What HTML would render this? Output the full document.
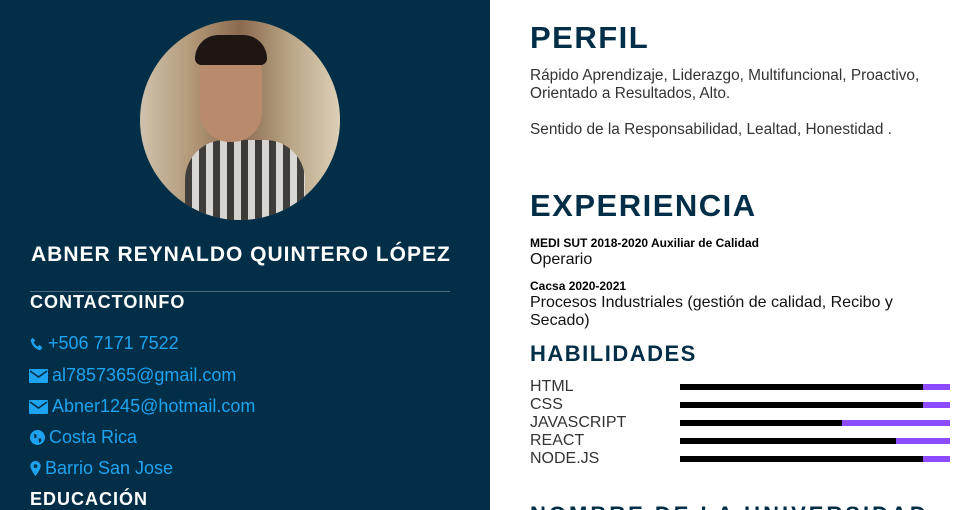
<!DOCTYPE html>
<html><head><style>
html,body{margin:0;width:968px;height:510px;overflow:hidden}
body{font-family:"Liberation Sans",sans-serif;background:#fff;position:relative}
.l{position:absolute;left:0;top:0;width:490px;height:510px;background:#022f47}
.ph{position:absolute;left:140px;top:20px;width:200px;height:200px;border-radius:50%;overflow:hidden;background:linear-gradient(90deg,#cfc2ad 0%,#b39a7a 25%,#8b6a4f 50%,#b8a585 75%,#ddd0b8 100%)}
.a{position:absolute;color:#fff;font-weight:bold}
.c{position:absolute;left:30px;color:#1ea3f0;font-size:18px}
.c svg{vertical-align:-2px;margin-right:4px}
.r{position:absolute;color:#022f47;font-weight:bold;letter-spacing:1.5px}
.t{position:absolute;left:530px;color:#333;font-size:15.4px}
.bar{position:absolute;left:680px;width:270px;height:6px;background:#8c4bff}
.bar div{height:6px;background:#000}
</style></head><body>
<div class="l">
<div class="ph">
<div style="position:absolute;left:45px;top:120px;width:120px;height:90px;border-radius:40px 40px 0 0;background:repeating-linear-gradient(90deg,#333 0 7px,#ddd 7px 14px),#888;opacity:.9"></div>
<div style="position:absolute;left:60px;top:22px;width:62px;height:100px;border-radius:30px;background:#b98b6c"></div>
<div style="position:absolute;left:55px;top:15px;width:72px;height:30px;border-radius:30px 30px 8px 8px;background:#1d1612"></div>
</div>
<div class="a" style="left:31px;top:243px;font-size:21px;letter-spacing:1px">ABNER REYNALDO QUINTERO LÓPEZ</div>
<div style="position:absolute;left:30px;top:291px;width:420px;height:1px;background:#4a6b7e"></div>
<div class="a" style="left:30px;top:292px;font-size:18px;letter-spacing:1px">CONTACTOINFO</div>
<div class="c" style="top:333px"><svg width="14" height="14" viewBox="0 0 16 16"><path d="M3 1l3 3-2 2c1 2 3 4 5 5l2-2 3 3-2 3C7 15 1 9 1 3z" fill="#1ea3f0"/></svg>+506 7171 7522</div>
<div class="c" style="top:365px;left:29px"><svg width="19" height="14" viewBox="0 0 19 14"><rect width="19" height="14" rx="1" fill="#1ea3f0"/><path d="M1 2l8.5 6L18 2" stroke="#022f47" stroke-width="1.6" fill="none"/></svg>al7857365@gmail.com</div>
<div class="c" style="top:396px;left:29px"><svg width="19" height="14" viewBox="0 0 19 14"><rect width="19" height="14" rx="1" fill="#1ea3f0"/><path d="M1 2l8.5 6L18 2" stroke="#022f47" stroke-width="1.6" fill="none"/></svg>Abner1245@hotmail.com</div>
<div class="c" style="top:427px"><svg width="15" height="15" viewBox="0 0 16 16"><circle cx="8" cy="8" r="8" fill="#1ea3f0"/><path d="M4 4l3 1 0 3-2 1zM9 9l3 0 0 3-2 2z" fill="#022f47"/></svg>Costa Rica</div>
<div class="c" style="top:458px"><svg width="11" height="15" viewBox="0 0 11 16"><path d="M5.5 0C2.5 0 0 2.4 0 5.4 0 9 5.5 16 5.5 16S11 9 11 5.4C11 2.4 8.5 0 5.5 0z" fill="#1ea3f0"/><circle cx="5.5" cy="5.5" r="2" fill="#022f47"/></svg>Barrio San Jose</div>
<div class="a" style="left:30px;top:489px;font-size:18px;letter-spacing:1px">EDUCACIÓN</div>
</div>
<div class="r" style="left:530px;top:20px;font-size:31px">PERFIL</div>
<div class="t" style="top:67px;line-height:18px">Rápido Aprendizaje, Liderazgo, Multifuncional, Proactivo,<br>Orientado a Resultados, Alto.</div>
<div class="t" style="top:121px">Sentido de la Responsabilidad, Lealtad, Honestidad .</div>
<div class="r" style="left:530px;top:188px;font-size:31px">EXPERIENCIA</div>
<div style="position:absolute;left:530px;top:236px;font-size:12px;font-weight:bold;color:#000">MEDI SUT 2018-2020 Auxiliar de Calidad</div>
<div class="t" style="top:251px;font-size:16px;color:#111">Operario</div>
<div style="position:absolute;left:530px;top:279px;font-size:12px;font-weight:bold;color:#000">Cacsa 2020-2021</div>
<div class="t" style="top:294px;font-size:16px;color:#111;line-height:18px">Procesos Industriales (gestión de calidad, Recibo y<br>Secado)</div>
<div class="r" style="left:530px;top:341px;font-size:22px">HABILIDADES</div>
<div class="t" style="top:378px;font-size:16px;line-height:18px">HTML<br>CSS<br>JAVASCRIPT<br>REACT<br>NODE.JS</div>
<div class="bar" style="top:384px"><div style="width:243px"></div></div>
<div class="bar" style="top:402px"><div style="width:243px"></div></div>
<div class="bar" style="top:420px"><div style="width:162px"></div></div>
<div class="bar" style="top:438px"><div style="width:216px"></div></div>
<div class="bar" style="top:456px"><div style="width:243px"></div></div>
<div class="r" style="left:530px;top:502px;font-size:22px;letter-spacing:3px">NOMBRE DE LA UNIVERSIDAD</div>
</body></html>
